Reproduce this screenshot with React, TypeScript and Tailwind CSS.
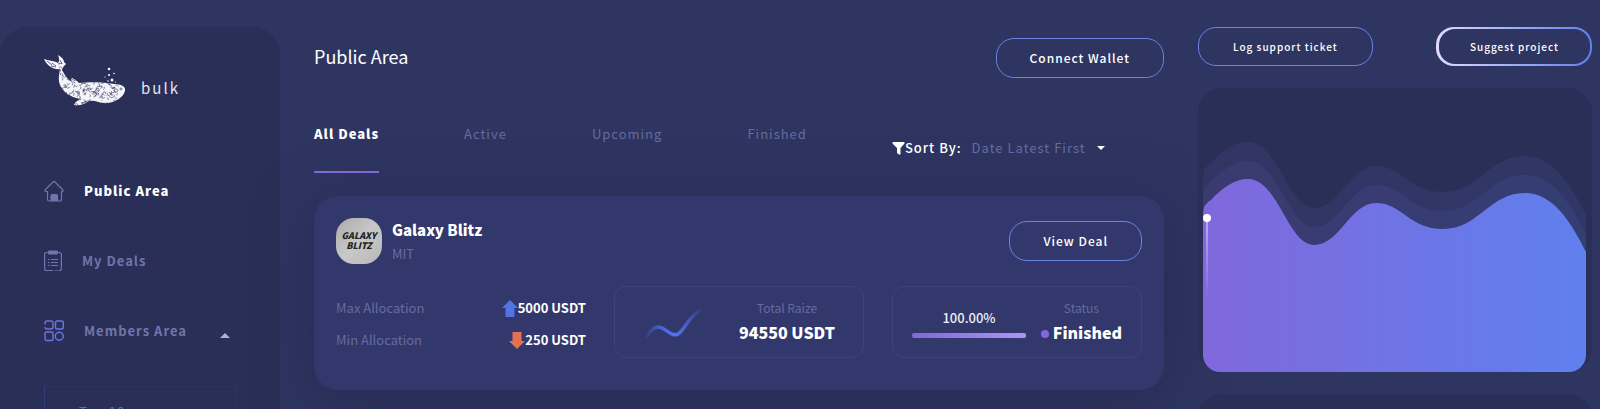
import type { ReactNode } from "react";

const tabs = ["Active", "Upcoming", "Finished"];

const muted = "text-[#656b9f]";

const outlineButton =
  "h-10 rounded-[18px] border border-[#6a84e6] px-[33px] text-xs font-medium tracking-[1px] text-white";

const wave =
  "M0 72 Q0 62 8 58 C20 45 32 37 45 37 C75 37 85 103 111 103 C137 103 147 61 173 61 C199 61 206 87 240 87 C276 87 286 51 322 51 C350 51 368 80 383 110 V230 H0 Z";

const noise = (n: number) => {
  const v = Math.sin(n * 127.1) * 43758.5;
  return v - Math.floor(v);
};

const specks = Array.from({ length: 230 }, (_, i) => ({
  x: 15 + noise(i + 1) * 60,
  y: 12 + noise(i + 301) * 38,
  r: noise(i + 601) * 180,
}));

const WhaleLogo = () => (
  <svg viewBox="0 0 82 52" className="h-[52px] w-[82px] shrink-0" aria-hidden="true">
    <defs>
      <clipPath id="whale-body">
        <path d="M0 4 C4 6 9 5 14 8 C16 6 15 3 14 0 C18 2 20 5 20 7 L22 9 C20 11 18 13 18 15 C20 18 21 21 25 25 L28 27 C27 25 27 24 28 23 C31 24 33 26 35 28 C45 27 60 27 70 29 C78 29 82 32 81 36 C79 43 71 47 64 48 C57 49 52 45 45 46 C41 49 36 51 30 50 C31 47 33 46 36 44 C26 42 19 37 16 30 C14 25 15 19 16 14 C10 15 3 11 0 4 Z" />
      </clipPath>
    </defs>
    <g clipPath="url(#whale-body)">
      <rect width="82" height="52" fill="#f4f4fa" />
      {specks.map((s, i) => (
        <path
          key={i}
          d={`M${s.x - 1.5} ${s.y} q1.500 -1.500 3 0`}
          transform={`rotate(${s.r} ${s.x} ${s.y})`}
          stroke="#2a2f57"
          strokeWidth="0.5"
          fill="none"
        />
      ))}
      <path d="M3 6 l5 4 M8 8 l4 3 M7 11 l5 1 M16 5 l2 4 M14 9 l4 -1" stroke="#2a2f57" strokeWidth="0.7" />
      <ellipse cx="77" cy="34" rx="3" ry="2.500" fill="#f4f4fa" />
      <circle cx="77" cy="34" r="1" fill="none" stroke="#2a2f57" strokeWidth="0.6" />
      <path d="M54 46 C60 48 68 46 71 43" stroke="#f4f4fa" strokeWidth="2" fill="none" />
    </g>
    <g fill="#f4f4fa">
      <circle cx="65" cy="14" r="1.300" />
      <circle cx="65" cy="20" r="1.100" />
      <circle cx="70" cy="18.500" r="0.8" />
      <circle cx="61" cy="22" r="0.6" />
      <circle cx="68" cy="25" r="1.500" />
      <circle cx="64" cy="26" r="0.8" />
      <circle cx="71.500" cy="27" r="0.6" />
    </g>
  </svg>
);

const HomeIcon = () => (
  <svg viewBox="0 0 20 22" className="h-[22px] w-5" fill="none" stroke="#6f76ae" strokeWidth="1.200" aria-hidden="true">
    <path d="M3.500 11.500 H2 Q0 11 1.500 9.500 L9 2 Q10 1 11 2 L18.500 9.500 Q20 11 18 11.500 H17.500 V19 Q17.500 21 15.500 21 H5 Q3.500 21 3.500 19 Z" />
    <path d="M7 20.500 V16 Q7 14.500 8.500 14.500 H12 Q13.500 14.500 13.500 16 V20.500 Z" fill="#6f76ae" />
  </svg>
);

const ClipboardIcon = () => (
  <svg viewBox="0 0 18 22" className="h-[22px] w-[18px]" fill="none" stroke="#6f76ae" strokeWidth="1.200" aria-hidden="true">
    <path d="M9 20.500 H2.500 Q.6 20.500 .6 18.500 V4.500 Q.6 2.500 2.500 2.500 H15.500 Q17.400 2.500 17.400 4.500 V18.500 Q17.400 20.500 15.500 20.500 H14.500 M10.500 20.500 h1 M12.500 20.500 h1" />
    <rect x="4.500" y="1" width="9" height="3" rx="1" fill="#6f76ae" />
    <path d="M4 9.500 h1.500 M4 12.500 h1.500 M4 15.500 h1.500 M7 9.500 h7 M7 12.500 h7 M7 15.500 h7" />
  </svg>
);

const GridIcon = () => (
  <svg viewBox="0 0 20 22" className="h-[22px] w-5" fill="none" stroke="url(#grid-stroke)" strokeWidth="1.400" aria-hidden="true">
    <defs>
      <linearGradient id="grid-stroke" gradientUnits="userSpaceOnUse" x1="0" y1="0" x2="20" y2="0">
        <stop stopColor="#7e69d8" />
        <stop offset="1" stopColor="#5e7ee8" />
      </linearGradient>
    </defs>
    <path d="M1 4.500 V3 Q1 1 3 1 H7 Q9 1 9 3 V7 Q9 9 7 9 H3 Q1 9 1 7" />
    <rect x="11.500" y="1" width="7.800" height="8" rx="1.500" />
    <rect x="1" y="12" width="8" height="8.500" rx="1.500" />
    <circle cx="15.300" cy="16.200" r="4" />
  </svg>
);

const NavItem = ({ icon, label, active }: { icon: ReactNode; label: string; active?: boolean }) => (
  <a href="#" className="flex h-[22px] items-center gap-5">
    {icon}
    <span
      className={
        active
          ? "text-[13px] font-black leading-[22px] tracking-[1px] text-white"
          : "text-[13px] font-bold leading-[22px] tracking-[1px] text-[#7076a8]"
      }
    >
      {label}
    </span>
  </a>
);

const Sidebar = () => (
  <aside className="mt-[27px] w-[280px] shrink-0 rounded-t-[28px] bg-[#2a2f57] pl-11 pt-7">
    <div className="flex h-[52px] gap-[15px]">
      <WhaleLogo />
      <span className="mt-[23px] text-[15px] leading-5 tracking-[2px] text-[#e4e4ee]">bulk</span>
    </div>
    <nav className="mt-[73px] flex flex-col gap-12">
      <NavItem icon={<HomeIcon />} label="Public Area" active />
      <NavItem icon={<ClipboardIcon />} label="My Deals" />
      <div className="flex items-center justify-between pr-[50px]">
        <NavItem icon={<GridIcon />} label="Members Area" />
        <button type="button" aria-label="Collapse Members Area" className="pt-2">
          <svg viewBox="0 0 10 5" className="h-[5px] w-[10px]" aria-hidden="true">
            <path d="M0 5 L5 0 L10 5 Z" fill="#b0b2c6" />
          </svg>
        </button>
      </div>
    </nav>
    <div className="mr-11 mt-11 border border-[#2e3461] border-l-[#323d78] pl-[34px] pt-[13px]">
      <a href="#" className={`block text-[13px] leading-6 tracking-[1px] ${muted}`}>
        Top 10
      </a>
    </div>
  </aside>
);

const TabsRow = () => (
  <div className="mt-11 flex h-[51px] gap-[85px] text-[13px] leading-6 tracking-[1px]">
    <button type="button" className="border-b-2 border-[#7e69d8] pb-[25px] font-black text-white">
      All Deals
    </button>
    {tabs.map((tab) => (
      <button key={tab} type="button" className={`pb-[27px] ${muted}`}>
        {tab}
      </button>
    ))}
    <div className="mt-[14px] flex h-6 items-center">
      <svg viewBox="0 0 13 13" className="h-[13px] w-[13px]" aria-hidden="true">
        <path d="M1 0 H12 Q13 .5 12.500 1.500 L8.500 6 V12 Q8 13 7 12.500 L5 11 V6 L.5 1.500 Q0 .5 1 0 Z" fill="#fff" />
      </svg>
      <label htmlFor="sort" className="font-medium text-white">
        Sort By:
      </label>
      <select id="sort" className={`ml-[10px] h-6 appearance-none bg-transparent tracking-[1px] ${muted}`}>
        <option>Date Latest First</option>
        <option>Date Oldest First</option>
      </select>
      <svg viewBox="0 0 8 4" className="pointer-events-none ml-2 h-1 w-2" aria-hidden="true">
        <path d="M0 0 H8 L4 4 Z" fill="#fff" />
      </svg>
    </div>
  </div>
);

const Arrow = ({ down }: { down?: boolean }) => (
  <svg viewBox="0 0 16 17" className={down ? "h-[17px] w-4 rotate-180" : "h-[17px] w-4"} aria-hidden="true">
    <path d="M8 0 L16 8 H12.500 V17 H3.500 V8 H0 Z" fill={down ? "#e37150" : "#5273e4"} />
  </svg>
);

const DealCard = () => (
  <article className="mt-[23px] rounded-[24px] bg-[#32386c] px-[22px] pb-8 pt-[22px] shadow-[0_10px_60px_rgba(34,40,78,0.8)]">
    <div className="flex h-[46px] items-start justify-between">
      <div className="flex gap-[10px]">
        <div className="flex size-[46px] flex-col items-center justify-center rounded-[18px] bg-linear-to-br from-[#aaa] via-[#c8c8c8] to-[#b8b8b8] text-[9px] font-black italic leading-[10px] text-[#222]">
          <span>GALAXY</span>
          <span>BLITZ</span>
        </div>
        <div>
          <h2 className="text-[15px] font-black leading-6 text-white">Galaxy Blitz</h2>
          <p className={`text-[13px] leading-6 ${muted}`}>MIT</p>
        </div>
      </div>
      <button type="button" className={`mt-[3px] ${outlineButton}`}>
        View Deal
      </button>
    </div>

    <div className="mt-[22px] grid h-[72px] grid-cols-3 gap-7">
      <dl className="flex flex-col justify-end gap-2 text-[13px] leading-6">
        <div className="flex justify-between">
          <dt className={muted}>Max Allocation</dt>
          <dd className="flex items-center font-bold text-white">
            <Arrow />
            5000 USDT
          </dd>
        </div>
        <div className="mb-[6px] flex justify-between">
          <dt className={muted}>Min Allocation</dt>
          <dd className="flex items-center font-bold text-white">
            <Arrow down />
            250 USDT
          </dd>
        </div>
      </dl>

      <div className="flex items-start justify-between rounded-xl border border-[#3d4377] pl-[30px] pr-7 pt-[9px]">
        <svg viewBox="0 0 58 32" className="mt-[12px] h-8 w-[58px]" fill="none" aria-hidden="true">
          <defs>
            <linearGradient id="spark">
              <stop stopColor="#5273f4" stopOpacity="0.100" />
              <stop offset="0.300" stopColor="#5273f4" stopOpacity="0.800" />
              <stop offset="0.550" stopColor="#5273f4" />
              <stop offset="1" stopColor="#5273f4" stopOpacity="0.050" />
            </linearGradient>
          </defs>
          <path d="M1 30 C6 20 11 17 17 20 C23 23 28 29 33 26 C40 22 41 11 57 1" stroke="url(#spark)" strokeWidth="3.500" />
        </svg>
        <div className="text-center">
          <p className={`text-xs leading-6 ${muted}`}>Total Raize</p>
          <p className="text-base font-black leading-6 text-white">94550 USDT</p>
        </div>
      </div>

      <div className="flex items-start justify-between rounded-xl border border-[#3d4377] px-[19px] pt-[9px]">
        <div className="mt-[10px] w-[114px] text-center">
          <p className="text-[13px] font-medium leading-6 text-[#eeeef4]">100.00%</p>
          <div className="mt-[3px] h-[5px] rounded-[2px] bg-linear-to-r from-[#7e69d8] to-[#a996f2]" />
        </div>
        <div className="text-center">
          <p className={`text-xs leading-6 ${muted}`}>Status</p>
          <p className="flex items-center gap-1 text-base font-black leading-6 text-white">
            <span className="mt-1 size-2 rounded-full bg-[#8068dc]" />
            Finished
          </p>
        </div>
      </div>
    </div>
  </article>
);

const WaveChart = () => (
  <div className="mt-[22px] rounded-[24px] bg-[#2a2f57] pl-[5px] pr-[6px] pt-[54px]">
    <svg viewBox="0 0 383 230" preserveAspectRatio="none" className="h-[230px] w-full overflow-hidden rounded-b-[17px]" role="img" aria-label="Raised funds over time">
      <defs>
        <linearGradient id="wave-fill">
          <stop stopColor="#8068dc" />
          <stop offset="1" stopColor="#5f80ee" />
        </linearGradient>
        <linearGradient id="pin-fade" x1="0" y1="0" x2="0" y2="1">
          <stop stopColor="#fff" stopOpacity="0.900" />
          <stop offset="1" stopColor="#fff" stopOpacity="0" />
        </linearGradient>
      </defs>
      <path d={wave} fill="url(#wave-fill)" opacity="0.100" transform="translate(0 -37)" />
      <path d={wave} fill="url(#wave-fill)" opacity="0.100" transform="translate(0 -18)" />
      <path d={wave} fill="url(#wave-fill)" />
      <rect x="3.500" y="76" width="1" height="82" fill="url(#pin-fade)" />
      <circle cx="4" cy="76" r="4" fill="#fff" />
    </svg>
  </div>
);

const App = () => (
  <div className="flex h-screen overflow-hidden bg-[#2f3561] font-['Noto_Sans_CJK_SC',sans-serif]">
    <Sidebar />
    <main className="ml-[34px] min-w-0 flex-1 pt-[38px]">
      <header className="flex h-10 items-start justify-between">
        <h1 className="mt-1 text-lg text-white">Public Area</h1>
        <button type="button" className={outlineButton}>
          Connect Wallet
        </button>
      </header>
      <TabsRow />
      <DealCard />
    </main>
    <aside className="ml-[34px] mr-2 w-[394px] shrink-0 pt-[27px]">
      <div className="flex justify-between text-[10px] font-medium leading-4 tracking-[1px] text-white">
        <button type="button" className="h-[39px] rounded-[18px] border border-[#6a84e6] px-[34px]">
          Log support ticket
        </button>
        <button type="button" className="h-[39px] rounded-[18px] bg-linear-to-r from-[#e2dafa] to-[#5f80ee] p-[2px] pl-[3px]">
          <span className="flex h-full items-center rounded-[16px] bg-[#2f3561] px-[31px]">Suggest project</span>
        </button>
      </div>
      <WaveChart />
      <div className="mt-[22px] h-10 rounded-t-[24px] bg-[#2a2f57]" />
    </aside>
  </div>
);

export default App;
